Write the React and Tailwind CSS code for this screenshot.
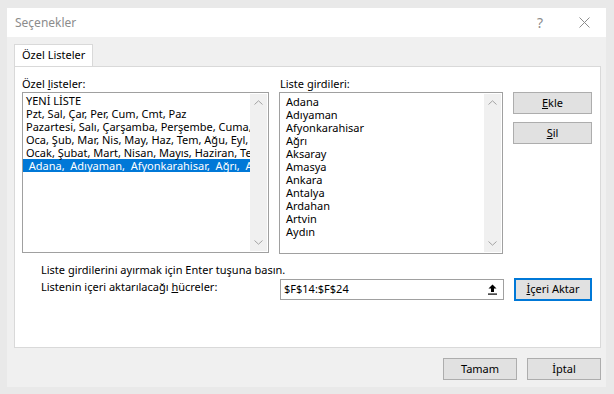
export default function App() {
  const ozel = [
    "YENİ LİSTE",
    "Pzt, Sal, Çar, Per, Cum, Cmt, Paz",
    "Pazartesi, Salı, Çarşamba, Perşembe, Cuma, Cumartesi, Pazar",
    "Oca, Şub, Mar, Nis, May, Haz, Tem, Ağu, Eyl, Eki, Kas, Ara",
    "Ocak, Şubat, Mart, Nisan, Mayıs, Haziran, Temmuz, Ağustos",
  ];
  const girdiler = [
    "Adana",
    "Adıyaman",
    "Afyonkarahisar",
    "Ağrı",
    "Aksaray",
    "Amasya",
    "Ankara",
    "Antalya",
    "Ardahan",
    "Artvin",
    "Aydın",
  ];

  return (
    <div
      className="w-[614px] h-[394px] bg-[#e9e9e9] pt-[8px] pl-[7px] text-[11px] text-black"
      style={{ fontFamily: '"Noto Sans", "Open Sans", sans-serif' }}
    >
      <div className="w-[599px] h-[379px] bg-[#f0f0f0] flex flex-col">
        {/* title bar */}
        <div className="h-[29px] bg-white flex items-center pl-[8px] pr-[16px]">
          <span className="text-[#8c8c8c] text-[12px]">Seçenekler</span>
          <span className="ml-auto text-[#8c8c8c] text-[14px] mr-[36px]">?</span>
          <svg width="11" height="11" viewBox="0 0 11 11">
            <path d="M0.5 0.5 L10.5 10.5 M10.5 0.5 L0.5 10.5" stroke="#8c8c8c" strokeWidth="1" />
          </svg>
        </div>

        {/* tab */}
        <div className="pl-[7px] pt-[7px] flex">
          <div className="w-[79px] h-[22px] bg-white border border-b-0 border-[#d9d9d9] pl-[7px] flex items-center">
            Özel Listeler
          </div>
        </div>

        {/* panel */}
        <div className="ml-[7px] w-[587px] h-[282px] bg-white border border-[#d9d9d9] pl-[7px] pt-[9px] flex flex-col">
          <div className="flex gap-[10px]">
            <div className="flex flex-col w-[247px]">
              <div className="h-[15px] leading-[15px] mb-[1px]">
                Özel <span className="underline">l</span>isteler:
              </div>
              <div className="h-[161px] border border-[#a0a0a0] flex">
                <div className="flex-1 min-w-0 overflow-hidden pt-[1px] leading-[13px] whitespace-pre">
                  {ozel.map((t) => (
                    <div key={t} className="pl-[3px]">
                      {t}
                    </div>
                  ))}
                  <div className="bg-[#0078d7] text-white">
                    {"  Adana,  Adıyaman,  Afyonkarahisar,  Ağrı,  Aksaray"}
                  </div>
                </div>
                <Scroll />
              </div>
            </div>

            <div className="flex flex-col w-[224px]">
              <div className="h-[15px] leading-[15px] mb-[1px] pl-[1px]">
                Liste <span className="underline">g</span>irdileri:
              </div>
              <div className="h-[162px] border border-[#a0a0a0] flex">
                <div className="flex-1 pt-[2px] pl-[6px] leading-[13px]">
                  {girdiler.map((t) => (
                    <div key={t}>{t}</div>
                  ))}
                </div>
                <Scroll />
              </div>
            </div>

            <div className="flex flex-col gap-[8px] pt-[16px]">
              <Btn w="w-[79px]">
                <span className="underline">E</span>kle
              </Btn>
              <Btn w="w-[79px]">
                <span className="underline">S</span>il
              </Btn>
            </div>
          </div>

          <div className="pl-[19px] mt-[8px] leading-[15px]">
            Liste girdilerini ayırmak için Enter tuşuna basın.
          </div>
          <div className="flex items-center mt-[1px]">
            <div className="pl-[19px] w-[258px] -mt-[5px]">
              Listenin içeri aktarılacağı <span className="underline">h</span>ücreler:
            </div>
            <div className="w-[224px] h-[21px] border border-[#a0a0a0] flex items-center pl-[3px] pr-[6px]">
              <span>$F$14:$F$24</span>
              <svg className="ml-auto" width="9" height="11" viewBox="0 0 9 11">
                <path d="M4.5 0.5 L8.5 4.5 L6 4.5 L6 8 L3 8 L3 4.5 L0.5 4.5 Z" fill="#000" />
                <rect x="0" y="9.5" width="9" height="1.2" fill="#000" />
              </svg>
            </div>
            <div className="ml-[10px] w-[78px] h-[23px] border-2 border-[#0078d7] bg-[#e1e1e1] flex items-center justify-center">
              <span>
                <span className="underline">İ</span>çeri Aktar
              </span>
            </div>
          </div>
        </div>

        {/* footer */}
        <div className="flex justify-end gap-[10px] pr-[5px] mt-[10px]">
          <Btn w="w-[74px]">Tamam</Btn>
          <Btn w="w-[74px]">İptal</Btn>
        </div>
      </div>
    </div>
  );
}

function Btn({ w, children }) {
  return (
    <div className={`${w} h-[22px] bg-[#e1e1e1] border border-[#adadad] flex items-center justify-center`}>
      <span>{children}</span>
    </div>
  );
}

function Scroll() {
  return (
    <div className="w-[17px] bg-[#f0f0f0] my-[1px] mr-[1px] flex flex-col items-center justify-between py-[6px]">
      <svg width="9" height="5" viewBox="0 0 9 5">
        <path d="M0.5 4.5 L4.5 0.8 L8.5 4.5" stroke="#a3a3a3" fill="none" strokeWidth="1" />
      </svg>
      <svg width="9" height="5" viewBox="0 0 9 5">
        <path d="M0.5 0.5 L4.5 4.2 L8.5 0.5" stroke="#a3a3a3" fill="none" strokeWidth="1" />
      </svg>
    </div>
  );
}
